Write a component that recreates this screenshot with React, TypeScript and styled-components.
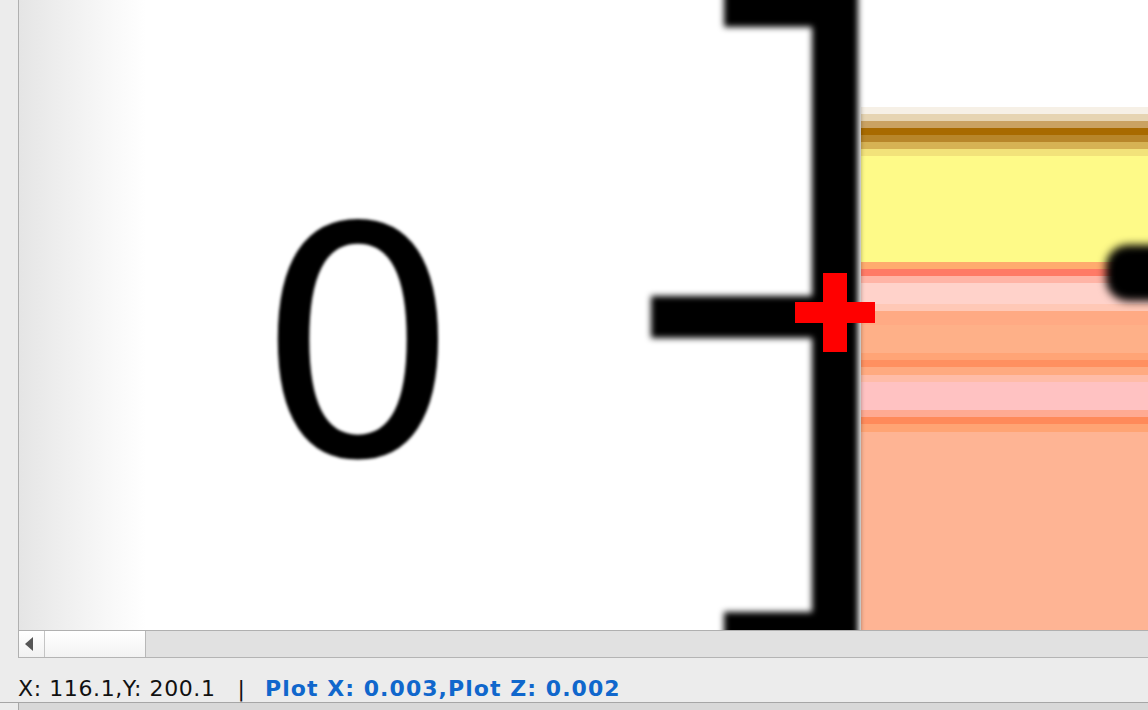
import React from "react";
import styled, { createGlobalStyle } from "styled-components";

const GlobalStyle = createGlobalStyle`
  html, body { margin: 0; padding: 0; background: #ececec; }
  body { font-family: "DejaVu Sans", "Liberation Sans", sans-serif; overflow: hidden; }
`;

const Window = styled.div`
  width: 1148px;
  height: 710px;
  display: flex;
  flex-direction: column;
  background: #ececec;
  overflow: hidden;
`;

const Main = styled.div`
  display: flex;
  flex-direction: row;
  height: 658px;
  padding-left: 18px;
`;

const Viewport = styled.div`
  flex: 1;
  display: flex;
  flex-direction: column;
  border-left: 1px solid #b0b0b0;
  border-bottom: 1px solid #b4b4b4;
  min-width: 0;
`;

const PlotArea = styled.div`
  height: 630px;
  overflow: hidden;
  background: linear-gradient(
    to right,
    #e5e5e5 0px,
    #eeeeee 40px,
    #f7f7f7 85px,
    #ffffff 127px
  );
  svg { display: block; }
`;

const ScrollBar = styled.div`
  height: 26px;
  display: flex;
  flex-direction: row;
  border-top: 1px solid #b0b0b0;
  background: #e1e1e1;
`;

const ArrowButton = styled.div`
  width: 26px;
  display: flex;
  align-items: center;
  justify-content: center;
  background: linear-gradient(to bottom, #ffffff, #f1f1f1);
  border-right: 1px solid #c4c4c4;
  padding-right: 4px;
  box-sizing: border-box;
`;

const Thumb = styled.div`
  width: 100px;
  background: linear-gradient(to bottom, #ffffff, #f2f2f2);
  border-right: 1px solid #b8b8b8;
`;

const Track = styled.div`
  flex: 1;
  background: #e1e1e1;
`;

const StatusBar = styled.div`
  height: 45px;
  display: flex;
  flex-direction: row;
  align-items: flex-end;
  padding: 0 0 1px 18px;
  box-sizing: border-box;
  border-bottom: 1px solid #a6a6a6;
  font-size: 22px;
  line-height: 24px;
  white-space: nowrap;
`;

const Coord = styled.span`
  color: #111111;
  letter-spacing: 0.6px;
`;

const Separator = styled.span`
  color: #111111;
  margin: 0 20px 0 22px;
`;

const PlotCoord = styled.span`
  color: #1067cc;
  font-weight: bold;
  letter-spacing: 1.05px;
`;

const BottomPanel = styled.div`
  flex: 1;
  margin-left: 18px;
  border-left: 1px solid #a8a8a8;
  background: #d8d8d8;
`;

const bands: [number, number, string][] = [
  [107, 114, "#f6f0e6"],
  [114, 121, "#e6d4b2"],
  [121, 128, "#caa262"],
  [128, 135, "#a86a00"],
  [135, 142, "#b8862a"],
  [142, 149, "#d6b254"],
  [149, 156, "#f2e27a"],
  [156, 262, "#fefa88"],
  [262, 269, "#ffab6e"],
  [269, 276, "#ff7a66"],
  [276, 283, "#ffb4a6"],
  [283, 304, "#ffd2ca"],
  [304, 311, "#ffc8b6"],
  [311, 325, "#ffaa84"],
  [325, 353, "#feb088"],
  [353, 360, "#ffa476"],
  [360, 367, "#ff9060"],
  [367, 375, "#ffaa80"],
  [375, 382, "#ffbca8"],
  [382, 410, "#ffc2c2"],
  [410, 417, "#ffaa92"],
  [417, 424, "#ff8a5a"],
  [424, 432, "#ffa474"],
  [432, 640, "#feb494"],
];

function Plot() {
  return (
    <svg width={1129} height={630} viewBox="19 0 1129 630">
      <defs>
        <filter id="soft" filterUnits="userSpaceOnUse" x="0" y="-100" width="1300" height="900">
          <feGaussianBlur stdDeviation="3.2" />
        </filter>
        <filter id="softer" filterUnits="userSpaceOnUse" x="0" y="-100" width="1300" height="900">
          <feGaussianBlur stdDeviation="4.5" />
        </filter>
        <filter id="glyph" filterUnits="userSpaceOnUse" x="0" y="-100" width="1300" height="900">
          <feGaussianBlur stdDeviation="1.6" />
        </filter>
      </defs>
      {bands.map(([y1, y2, c]) => (
        <rect key={y1} x={861} y={y1} width={300} height={y2 - y1} fill={c} />
      ))}
      <g filter="url(#softer)">
        <rect x={1106} y={245} width={80} height={56} rx={22} fill="#000" />
      </g>
      <g filter="url(#soft)" fill="#000">
        <rect x={812} y={-30} width={46} height={700} />
        <rect x={724} y={-30} width={100} height={57} />
        <rect x={651} y={296} width={170} height={42} />
        <rect x={724} y={612} width={100} height={60} />
      </g>
      <text
        x={358}
        y={455}
        textAnchor="middle"
        fontFamily="'DejaVu Sans', sans-serif"
        fontSize={318}
        fill="#000"
        filter="url(#glyph)"
      >
        0
      </text>
      <g fill="#ff0000">
        <rect x={823} y={273} width={24} height={79} />
        <rect x={795} y={302} width={80} height={21} />
      </g>
    </svg>
  );
}

export default function App() {
  return (
    <>
      <GlobalStyle />
      <Window>
        <Main>
          <Viewport>
            <PlotArea>
              <Plot />
            </PlotArea>
            <ScrollBar>
              <ArrowButton>
                <svg width="9" height="14" viewBox="0 0 9 14">
                  <path d="M8 0 L0 7 L8 14 Z" fill="#555" />
                </svg>
              </ArrowButton>
              <Thumb />
              <Track />
            </ScrollBar>
          </Viewport>
        </Main>
        <StatusBar>
          <Coord>X: 116.1,Y: 200.1</Coord>
          <Separator>|</Separator>
          <PlotCoord>Plot X: 0.003,Plot Z: 0.002</PlotCoord>
        </StatusBar>
        <BottomPanel />
      </Window>
    </>
  );
}
